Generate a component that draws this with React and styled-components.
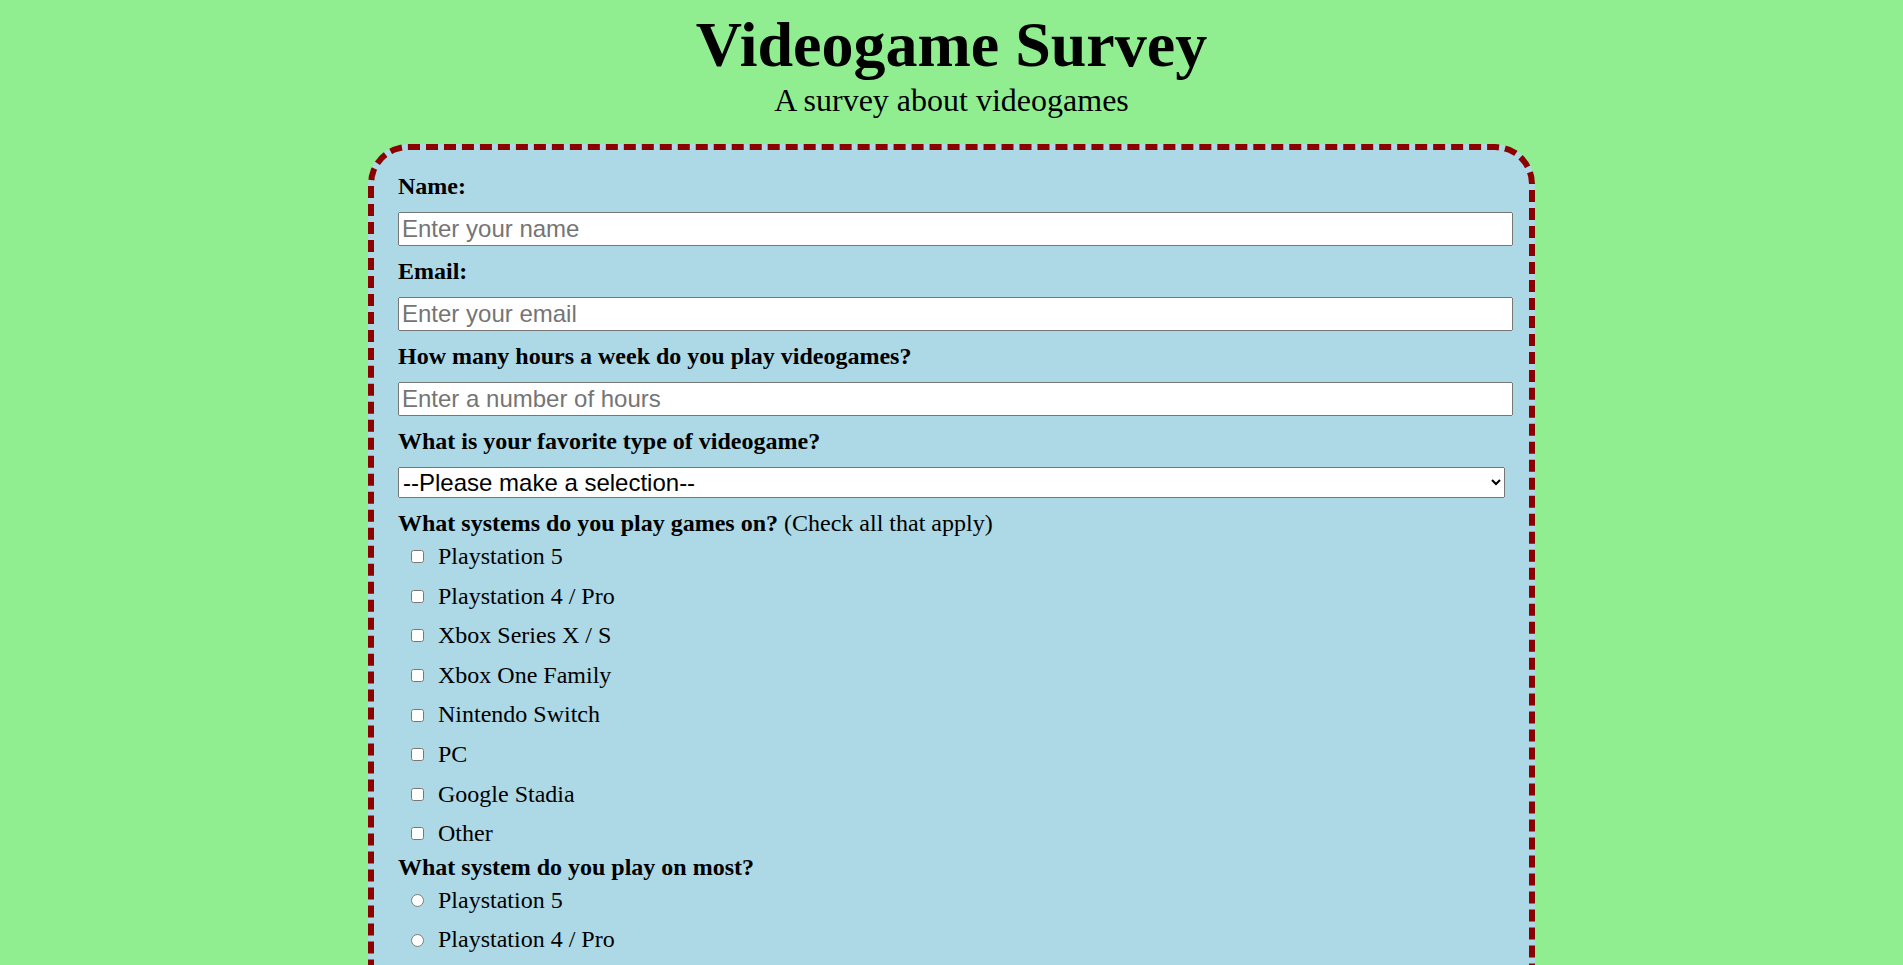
import React from "react";
import styled, { createGlobalStyle } from "styled-components";

const GlobalStyle = createGlobalStyle`
  body {
    margin: 8px;
    background: #90ee90;
    font-family: "Liberation Serif", "Times New Roman", serif;
    color: #000;
  }
`;

const Header = styled.header`
  text-align: center;
`;

const Title = styled.h1`
  margin: 0;
  font-size: 64px;
  font-weight: bold;
`;

const Subtitle = styled.p`
  margin: 0 0 25px;
  font-size: 32px;
`;

const Form = styled.form`
  box-sizing: border-box;
  width: 1167px;
  margin: 0 auto;
  padding: 23px 24px 24px;
  background: #add8e6;
  border: 6px dashed #8b0000;
  border-radius: 40px;
  font-size: 24px;
`;

const FieldLabel = styled.label`
  display: block;
  margin: 0;
  font-weight: bold;
`;

const Note = styled.span`
  font-weight: normal;
`;

const TextInput = styled.input`
  display: block;
  width: 100%;
  margin: 12px 0;
  font-family: "Liberation Sans", Arial, sans-serif;
  font-size: 24px;
`;

const Select = styled.select`
  display: block;
  width: 100%;
  margin: 12px 0;
  font-family: "Liberation Sans", Arial, sans-serif;
  font-size: 24px;
`;

const OptionRow = styled.label`
  display: flex;
  align-items: center;
  padding: 6px 0;
  line-height: 27.6px;
`;

const Choice = styled.input`
  width: 13px;
  height: 13px;
  margin: 0 14px 0 13px;
`;

const TextArea = styled.textarea`
  display: block;
  width: 100%;
  height: 120px;
  margin: 12px 0;
  font-family: "Liberation Sans", Arial, sans-serif;
  font-size: 24px;
`;

const Submit = styled.button`
  display: block;
  margin: 12px auto 0;
  font-size: 24px;
  font-family: "Liberation Sans", Arial, sans-serif;
  padding: 6px 24px;
`;

const systems = [
  "Playstation 5",
  "Playstation 4 / Pro",
  "Xbox Series X / S",
  "Xbox One Family",
  "Nintendo Switch",
  "PC",
  "Google Stadia",
  "Other",
];

export default function App() {
  return (
    <>
      <GlobalStyle />
      <Header>
        <Title id="title">Videogame Survey</Title>
        <Subtitle id="description">A survey about videogames</Subtitle>
      </Header>
      <Form id="survey-form" onSubmit={(e) => e.preventDefault()}>
        <FieldLabel htmlFor="name">Name:</FieldLabel>
        <TextInput id="name" type="text" placeholder="Enter your name" />

        <FieldLabel htmlFor="email">Email:</FieldLabel>
        <TextInput id="email" type="email" placeholder="Enter your email" />

        <FieldLabel htmlFor="number">
          How many hours a week do you play videogames?
        </FieldLabel>
        <TextInput id="number" type="number" placeholder="Enter a number of hours" />

        <FieldLabel htmlFor="dropdown">
          What is your favorite type of videogame?
        </FieldLabel>
        <Select id="dropdown" defaultValue="">
          <option value="" disabled>
            --Please make a selection--
          </option>
          <option>Action</option>
          <option>Adventure</option>
          <option>RPG</option>
          <option>Sports</option>
          <option>Strategy</option>
        </Select>

        <FieldLabel as="p">
          What systems do you play games on? <Note>(Check all that apply)</Note>
        </FieldLabel>
        {systems.map((s) => (
          <OptionRow key={"c" + s}>
            <Choice type="checkbox" value={s} />
            {s}
          </OptionRow>
        ))}

        <FieldLabel as="p">What system do you play on most?</FieldLabel>
        {systems.map((s) => (
          <OptionRow key={"r" + s}>
            <Choice type="radio" name="most" value={s} />
            {s}
          </OptionRow>
        ))}

        <FieldLabel htmlFor="comments">Any comments?</FieldLabel>
        <TextArea id="comments" placeholder="Enter your comments here" />
        <Submit id="submit" type="submit">Submit</Submit>
      </Form>
    </>
  );
}
